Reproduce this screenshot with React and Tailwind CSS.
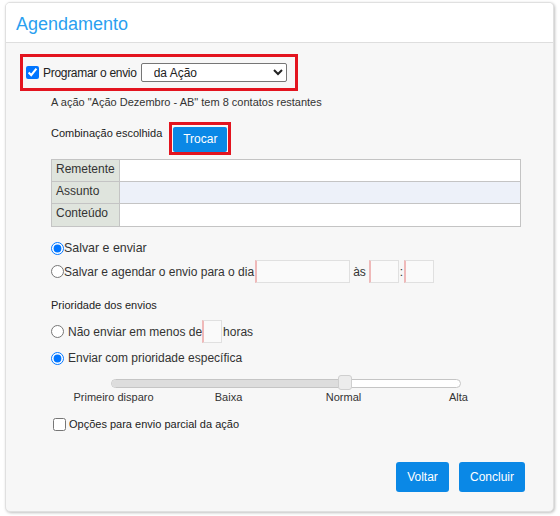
import React from "react";

const font = { fontFamily: '"Liberation Sans", Arial, sans-serif' };

const Field = ({ className }) => (
  <input
    type="text"
    className={`h-[23px] bg-[#fafafa] border border-[#e0e0e0] border-l-2 border-l-[#efb9b9] ${className}`}
  />
);

const App = () => {
  return (
    <div className="w-[560px] h-[516px] bg-white pt-[2px] pl-[5px]" style={font}>
      <div className="w-[549px] h-[510px] flex flex-col rounded-[5px] border border-[#e0e0e0] shadow-[1px_1px_3px_rgba(0,0,0,0.25)] overflow-hidden bg-[#f7f7f7]">
        {/* header */}
        <div className="h-[40px] shrink-0 bg-white border-b border-[#dedede] flex items-center pl-[10px]">
          <span className="text-[18px] text-[#2a9ff0] leading-none mt-[2px]">Agendamento</span>
        </div>

        {/* body */}
        <div className="flex-1 flex flex-col pt-[11px] text-[#333]">
          <div className="ml-[14px] w-[278px] h-[37px] border-[3px] border-[#e3141f] flex items-center pl-[3px]">
            <input type="checkbox" defaultChecked className="w-[13px] h-[13px]" />
            <span className="ml-[4px] text-[12px] tracking-[-0.3px] text-[#222] whitespace-nowrap">Programar o envio</span>
            <select className="ml-[4px] w-[146px] h-[19px] pl-[8px] text-[12px] border border-[#767676] bg-white text-[#222] rounded-[2px]">
              <option>da Ação</option>
            </select>
          </div>

          <div className="ml-[45px] mt-[4px] text-[11px] leading-[14px] text-[#333]">
            A ação "Ação Dezembro - AB" tem 8 contatos restantes
          </div>

          <div className="ml-[45px] mt-[13px] flex items-start gap-[7px]">
            <span className="pt-[4px] text-[11px] leading-[14px] text-[#222]">Combinação escolhida</span>
            <div className="w-[62px] h-[33px] border-[3px] border-[#e3141f] p-px">
              <button className="w-full h-full bg-[#0a88e6] text-white text-[12px] rounded-[2px]">Trocar</button>
            </div>
          </div>

          <div className="ml-[45px] mt-[4px] w-[470px] border border-[#c4c4c4] text-[12px]">
            <div className="flex h-[22px] border-b border-[#c4c4c4]">
              <div className="w-[68px] bg-[#dfe4dd] border-r border-[#c4c4c4] pl-[4px] leading-[19px]">Remetente</div>
              <div className="flex-1 bg-white"></div>
            </div>
            <div className="flex h-[22px] border-b border-[#c4c4c4]">
              <div className="w-[68px] bg-[#dfe4dd] border-r border-[#c4c4c4] pl-[4px] leading-[19px]">Assunto</div>
              <div className="flex-1 bg-[#edf1f9]"></div>
            </div>
            <div className="flex h-[22px]">
              <div className="w-[68px] bg-[#dfe4dd] border-r border-[#c4c4c4] pl-[4px] leading-[19px]">Conteúdo</div>
              <div className="flex-1 bg-white"></div>
            </div>
          </div>

          <label className="ml-[45px] mt-[10px] h-[22px] flex items-center text-[12.4px]">
            <input type="radio" name="envio" defaultChecked className="w-[13px] h-[13px]" />
            <span>Salvar e enviar</span>
          </label>
          <div className="ml-[45px] mt-px h-[23px] flex items-center text-[12px]">
            <input type="radio" name="envio" className="w-[13px] h-[13px]" />
            <span>Salvar e agendar o envio para o dia</span>
            <Field className="ml-[1px] w-[95px]" />
            <span className="ml-[3px]">às</span>
            <Field className="ml-[3px] w-[30px]" />
            <span className="mx-px">:</span>
            <Field className="w-[30px]" />
          </div>

          <div className="ml-[45px] mt-[15px] text-[11px] leading-[14px] text-[#222]">Prioridade dos envios</div>

          <div className="ml-[45px] mt-[8px] h-[23px] flex items-center text-[12px]">
            <input type="radio" name="prio" className="w-[13px] h-[13px]" />
            <span className="ml-[4px]">Não enviar em menos de</span>
            <input type="text" className="w-[20px] h-[23px] bg-[#fafafa] border border-[#e0e0e0] border-l-2 border-l-[#efb9b9]" />
            <span className="ml-[1px]">horas</span>
          </div>
          <div className="ml-[45px] mt-[4px] h-[22px] flex items-center text-[12px]">
            <input type="radio" name="prio" defaultChecked className="w-[13px] h-[13px]" />
            <span className="ml-[4px]">Enviar com prioridade específica</span>
          </div>

          <div className="relative ml-[105px] mt-[6px] w-[350px] h-[15px]">
            <div className="absolute left-0 right-0 top-[4px] h-[9px] rounded-full border border-[#c5c5c5] bg-white overflow-hidden">
              <div className="h-full w-[232px] bg-[#dddddd]"></div>
            </div>
            <div className="absolute left-[227px] top-0 w-[14px] h-[15px] rounded-[3px] border border-[#cfcfcf] bg-[#ececec]"></div>
          </div>
          <div className="ml-[50px] w-[460px] grid grid-cols-4 text-center text-[11px] leading-[14px] text-[#333]">
            <span>Primeiro disparo</span>
            <span>Baixa</span>
            <span>Normal</span>
            <span>Alta</span>
          </div>

          <label className="ml-[47px] mt-[12px] h-[16px] flex items-center">
            <input type="checkbox" className="w-[13px] h-[13px]" />
            <span className="ml-[3px] text-[11px] text-[#222]">Opções para envio parcial da ação</span>
          </label>

          <div className="flex-1"></div>
          <div className="flex justify-end gap-[10px] pr-[28px] pb-[19px]">
            <button className="w-[53px] h-[30px] rounded-[3px] bg-[#0a88e6] text-white text-[12px]">Voltar</button>
            <button className="w-[66px] h-[30px] rounded-[3px] bg-[#0a88e6] text-white text-[12px]">Concluir</button>
          </div>
        </div>
      </div>
    </div>
  );
};

export default App;
